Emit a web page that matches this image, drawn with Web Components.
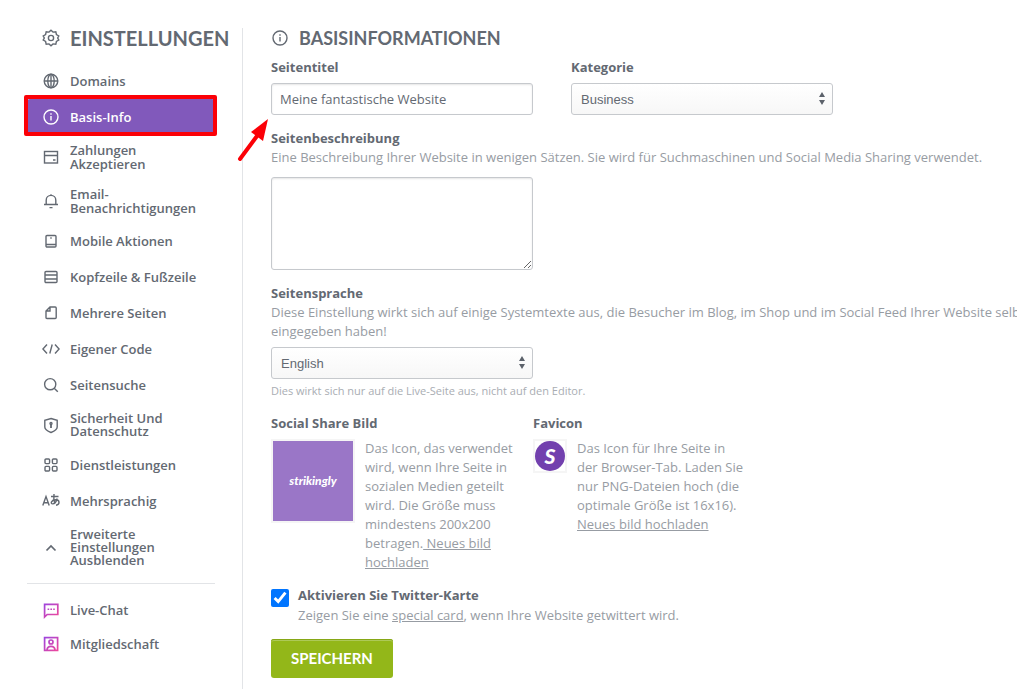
<!DOCTYPE html>
<html lang="de">
<head>
<meta charset="utf-8">
<meta name="viewport" content="width=device-width, initial-scale=1">
<title>Einstellungen</title>
<style>
  html { overflow-x: hidden; }
  body {
    margin: 0; background: #fff; color: #636972; overflow-x: hidden;
    font: 13px/19px "Open Sans", "Noto Sans", sans-serif;
    --muted: #979ca3; --faint: #a9adb3; --accent: #8159bb; --line: #e2e4e7;
    --edge: #c6c9cd; --display: Lato, "Open Sans", sans-serif;
  }
  a { color: inherit; }
</style>
</head>
<body>
<settings-layout>
  <section-heading slot="side" icon="gear" size="large">Einstellungen</section-heading>
  <nav-group slot="side" label="Einstellungen">
    <nav-item icon="globe">Domains</nav-item>
    <nav-item icon="info" active>Basis-Info</nav-item>
    <nav-item icon="card">Zahlungen Akzeptieren</nav-item>
    <nav-item icon="bell">Email-Benachrichtigungen</nav-item>
    <nav-item icon="mobile">Mobile Aktionen</nav-item>
    <nav-item icon="rows">Kopfzeile &amp; Fußzeile</nav-item>
    <nav-item icon="page">Mehrere Seiten</nav-item>
  </nav-group>
  <nav-group slot="side" label="Erweitert" dense>
    <nav-item icon="code">Eigener Code</nav-item>
    <nav-item icon="search">Seitensuche</nav-item>
    <nav-item icon="shield">Sicherheit Und Datenschutz</nav-item>
    <nav-item icon="grid">Dienstleistungen</nav-item>
    <nav-item icon="language">Mehrsprachig</nav-item>
    <nav-item icon="up">Erweiterte Einstellungen Ausblenden</nav-item>
  </nav-group>
  <nav-group slot="side" label="Hilfe" divided>
    <nav-item icon="chat">Live-Chat</nav-item>
    <nav-item icon="member">Mitgliedschaft</nav-item>
  </nav-group>
  <basic-info-form></basic-info-form>
</settings-layout>

<script>
const icons = {
  gear: '<path d="M9 1.200 11 3.100l2.800-.4.6 2.800 2.400 1.400L15.700 9l1.100 2.100-2.400 1.400-.6 2.800-2.800-.4-2 1.900-2-1.900-2.800.4-.6-2.800-2.400-1.400L2.300 9 1.200 6.900l2.400-1.400.6-2.800 2.800.4z"/><circle cx="9" cy="9" r="2.600"/>',
  globe: '<circle cx="9" cy="9" r="6.800"/><ellipse cx="9" cy="9" rx="3.200" ry="6.800"/><path d="M9 2.200v13.600M2.200 9h13.600"/>',
  info: '<circle cx="9" cy="9" r="7"/><path d="M9 8v4.600M9 5.200v1.500"/>',
  card: '<rect x="2.500" y="3.500" width="13" height="11.500"/><path d="M2.500 7.500h13M11 12h2.500"/>',
  bell: '<path d="M2 12.500h14M4.200 12.500V8.200a4.800 4.800 0 0 1 9.600 0v4.300M9 2.200v1.400M7.500 15.600h3"/>',
  mobile: '<rect x="4" y="3.500" width="10" height="11.500" rx="1"/><path d="M4 12.500h10M9 5.300v1.400"/>',
  rows: '<rect x="3" y="3.500" width="12" height="11" rx="1"/><path d="M3 7h12M3 11h12"/>',
  page: '<path d="M8 3h5.200q1 0 1 1v9.500q0 1-1 1H5q-1 0-1-1V7zM8 3v4H4"/>',
  code: '<path d="M5 4.500.9 9 5 13.500M13 4.500 17.100 9 13 13.500M10.200 4.500l-2.400 9"/>',
  search: '<circle cx="8.200" cy="8.200" r="5.600"/><path d="m12.200 12.200 3.600 3.600"/>',
  shield: '<path d="m9 2.500 6.200 1.800v6.600q0 3.100-6.200 5.600-6.200-2.500-6.200-5.600V4.300z"/><path d="M9 8v4" stroke-width="1.800"/><circle cx="9" cy="7.500" r="1"/>',
  grid: '<rect x="3" y="3" width="4.600" height="4.600" rx="1"/><rect x="10.400" y="3" width="4.600" height="4.600" rx="1"/><rect x="3" y="10.400" width="4.600" height="4.600" rx="1"/><rect x="10.400" y="10.400" width="4.600" height="4.600" rx="1"/>',
  language: '<path d="M.8 13.500 4 4.500l3.200 9M1.900 10.700h4.200M9 4.500h7.500M12 2c-.4 3.500-.3 6.700.7 9.300M15.200 6.500c-.8 3-2.700 5.400-4.500 5.400-2.800 0-1.300-4.200 3-4.200 4.400 0 4.300 5 .3 5.600"/>',
  up: '<path d="m4.500 11.500 4.500-4.500 4.500 4.500" stroke-width="1.700"/>',
  chat: '<path d="M2.600 16V3.300h13.200v10.200H5.200z"/><path d="M5.600 8.300h1.600M8.400 8.300H10M11.200 8.300h1.600" stroke-width="1.500"/>',
  member: '<rect x="2.600" y="2.600" width="13" height="12.800"/><circle cx="9" cy="7" r="2"/><path d="M5 15.200c.2-5 7.800-5 8 0"/>'
};

class BaseElement extends HTMLElement {
  connectedCallback() {
    if (this.shadowRoot) return;
    this.attachShadow({ mode: 'open' }).innerHTML =
      '<style>*{box-sizing:border-box}:host{display:block}' + this.css() + '</style>' + this.html();
  }
  css() { return ''; }
  html() { return '<slot></slot>'; }
}

customElements.define('ui-icon', class extends BaseElement {
  css() {
    return `:host{flex:none;width:18px;height:18px}
      svg{display:block;width:100%;height:100%;fill:none;stroke:currentColor;stroke-width:1.400}`;
  }
  html() {
    const name = this.getAttribute('name');
    const vivid = name === 'chat' || name === 'member';
    return `<svg viewBox="0 0 18 18" aria-hidden="true"${vivid ? ' style="stroke:url(#g);stroke-width:1.700"' : ''}>
      <defs><linearGradient id="g" gradientUnits="userSpaceOnUse" x1="2" y1="2" x2="16" y2="16">
      <stop stop-color="#9b45e0"/><stop offset="1" stop-color="#f0489a"/></linearGradient></defs>${icons[name]}</svg>`;
  }
});

customElements.define('settings-layout', class extends BaseElement {
  css() {
    return `:host{display:grid;grid-template-columns:243px minmax(820px,1fr);padding-top:28px;min-height:100vh;box-sizing:border-box}
      aside{border-right:1px solid var(--line);padding:0 0 20px 27px}
      main{padding:0 0 11px 28px}`;
  }
  html() { return '<aside><slot name="side"></slot></aside><main><slot></slot></main>'; }
});

customElements.define('section-heading', class extends BaseElement {
  css() {
    return `h2{display:flex;align-items:center;gap:10px;margin:0;height:20px;text-transform:uppercase;
        font:700 18px/20px var(--display);white-space:nowrap}
      :host([size=large]){padding-left:15px;margin-bottom:15px}
      :host([size=large]) h2{font-size:20px}`;
  }
  html() { return `<h2><ui-icon name="${this.getAttribute('icon')}"></ui-icon><slot></slot></h2>`; }
});

customElements.define('nav-group', class extends BaseElement {
  css() {
    return `:host{--leading:14px;--row:36px;--pad:8px;margin-right:27px}
      :host([dense]){--leading:13px;--pad:9px}
      :host([divided]){--row:34px;border-top:1px solid var(--line);margin-top:7px;padding-top:9px}`;
  }
  html() { return `<nav aria-label="${this.getAttribute('label')}"><slot></slot></nav>`; }
});

customElements.define('nav-item', class extends BaseElement {
  css() {
    return `:host{position:relative}
      a{display:flex;align-items:center;gap:10px;min-height:var(--row);padding:var(--pad) 15px;
        color:inherit;text-decoration:none;font-weight:600;line-height:var(--leading)}
      span{width:132px}
      :host([active]) a{background:var(--accent);color:#fff;border-radius:3px}
      :host([active])::after{content:"";position:absolute;inset:-4px -2px -1px -3px;border:4px solid #fb0007;border-radius:2px}`;
  }
  html() {
    const current = this.hasAttribute('active') ? ' aria-current="page"' : '';
    return `<a href="#"${current}><ui-icon name="${this.getAttribute('icon')}"></ui-icon><span><slot></slot></span></a>`;
  }
});

const labelCss = 'label,h3{display:block;margin:0;font-size:13px;font-weight:700;line-height:20px}';

customElements.define('text-field', class extends BaseElement {
  css() {
    return `${labelCss}
      input,textarea{display:block;width:262px;margin:0;border:1px solid var(--edge);border-radius:3px;background:#fff;
        box-shadow:inset 0 1px 2px #0000001a;color:inherit;font:inherit;padding:0 8px;outline:0}
      input{height:32px;margin-top:6px}
      textarea{height:93px;margin-top:10px}
      .help{color:var(--muted)}`;
  }
  html() {
    return `<label for="f">${this.getAttribute('label')}</label>` + (this.hasAttribute('multiline')
      ? '<div class="help"><slot></slot></div><textarea id="f"></textarea>'
      : `<input id="f" type="text" value="${this.getAttribute('value')}">`);
  }
});

customElements.define('select-field', class extends BaseElement {
  css() {
    return `${labelCss}
      .box{position:relative;width:262px;margin-top:6px}
      select{display:block;appearance:none;width:100%;height:32px;padding:0 9px;border:1px solid var(--edge);border-radius:3px;
        background:linear-gradient(#fff,#f7f7f7);color:inherit;font:13px "Liberation Sans",Arial,sans-serif}
      svg{position:absolute;right:8px;top:9px;width:6px;height:14px;fill:#5c626b;pointer-events:none}
      .help{color:var(--muted)}`;
  }
  html() {
    return `<label for="f">${this.getAttribute('label')}</label><div class="help"><slot></slot></div>
      <div class="box"><select id="f"><option>${this.getAttribute('value')}</option></select>
      <svg viewBox="0 0 6 14" aria-hidden="true"><path d="M3 0l3 5H0zM3 13l3-5H0z"/></svg></div>`;
  }
});

customElements.define('image-field', class extends BaseElement {
  css() {
    return `${labelCss}
      .row{display:flex;align-items:flex-start;gap:10px;margin-top:6px}
      .frame{flex:none;border:2px solid #f5f5f5}
      p{margin:0;color:var(--muted)}`;
  }
  html() {
    return `<h3>${this.getAttribute('label')}</h3><div class="row"><div class="frame"><slot name="picture"></slot></div><p><slot></slot></p></div>`;
  }
});

customElements.define('share-picture', class extends BaseElement {
  css() {
    return `:host{display:grid;place-items:center;width:80px;height:80px;background:#9a76c7;color:#fff;
      font:italic 900 12px/20px var(--display)}`;
  }
  html() { return '<span>strikingly</span>'; }
});

customElements.define('favicon-picture', class extends BaseElement {
  css() {
    return `:host{display:grid;place-items:center;width:30px;height:30px;border-radius:50%;background:#7240ae;color:#fff;
      font:italic 900 21px/30px var(--display)}`;
  }
  html() { return '<span>S</span>'; }
});

customElements.define('check-field', class extends BaseElement {
  css() {
    return `${labelCss}
      :host{display:flex;align-items:flex-start;gap:9px}
      input{flex:none;width:18px;height:18px;margin:4px 0 0;accent-color:#0075ff}
      p{margin:1px 0 0;color:var(--muted)}`;
  }
  html() {
    return `<input id="c" type="checkbox" checked><div><label for="c">${this.getAttribute('label')}</label><p><slot></slot></p></div>`;
  }
});

customElements.define('save-button', class extends BaseElement {
  css() {
    return `button{display:block;height:39px;padding:0 20px;border:0;border-radius:3px;background:#93b719;color:#fff;
      box-shadow:inset 0 1px #86a716,inset 0 2px #adc957;font:700 15px/37px var(--display);text-transform:uppercase}`;
  }
  html() { return '<button type="submit"><slot></slot></button>'; }
});

customElements.define('pointer-arrow', class extends BaseElement {
  css() { return ':host{position:absolute;left:-34px;top:91px;width:31px;height:42px}svg{display:block}'; }
  html() {
    return `<svg width="31" height="42" viewBox="0 0 31 42" aria-hidden="true"><path d="M3 40 20 17" stroke="#fb0007" stroke-width="4" stroke-linecap="round"/><path d="M31 0 14 13l12 9z" fill="#fb0007"/></svg>`;
  }
});

customElements.define('basic-info-form', class extends BaseElement {
  css() {
    return `:host{position:relative}
      a{color:inherit}
      form{display:flex;flex-direction:column;gap:13px}
      section-heading{margin-bottom:9px}
      .pair{display:flex;gap:38px}
      .images{display:flex}
      .images>:first-child{width:262px;padding-right:12px}
      .images>:last-child{width:214px}
      small{display:block;margin-top:2px;font-size:11px;color:var(--faint)}
      save-button{margin-top:1px}`;
  }
  html() {
    return `<section-heading icon="info">Basisinformationen</section-heading>
    <form>
      <div class="pair">
        <text-field label="Seitentitel" value="Meine fantastische Website"></text-field>
        <select-field label="Kategorie" value="Business"></select-field>
      </div>
      <text-field label="Seitenbeschreibung" multiline>Eine Beschreibung Ihrer Website in wenigen Sätzen. Sie wird für Suchmaschinen und Social Media Sharing verwendet.</text-field>
      <div>
        <select-field label="Seitensprache" value="English">Diese Einstellung wirkt sich auf einige Systemtexte aus, die Besucher im Blog, im Shop und im Social Feed Ihrer Website selbst<br>eingegeben haben!</select-field>
        <small>Dies wirkt sich nur auf die Live-Seite aus, nicht auf den Editor.</small>
      </div>
      <div class="images">
        <image-field label="Social Share Bild"><share-picture slot="picture"></share-picture>Das Icon, das verwendet wird, wenn Ihre Seite in sozialen Medien geteilt wird. Die Größe muss mindestens 200x200 betragen.<a href="#"> Neues bild hochladen</a></image-field>
        <image-field label="Favicon"><favicon-picture slot="picture"></favicon-picture>Das Icon für Ihre Seite in der Browser-Tab. Laden Sie nur PNG-Dateien hoch (die optimale Größe ist 16x16). <a href="#">Neues bild hochladen</a></image-field>
      </div>
      <check-field label="Aktivieren Sie Twitter-Karte">Zeigen Sie eine <a href="#">special card</a>, wenn Ihre Website getwittert wird.</check-field>
      <save-button>Speichern</save-button>
    </form>
    <pointer-arrow></pointer-arrow>`;
  }
});
</script>
</body>
</html>
